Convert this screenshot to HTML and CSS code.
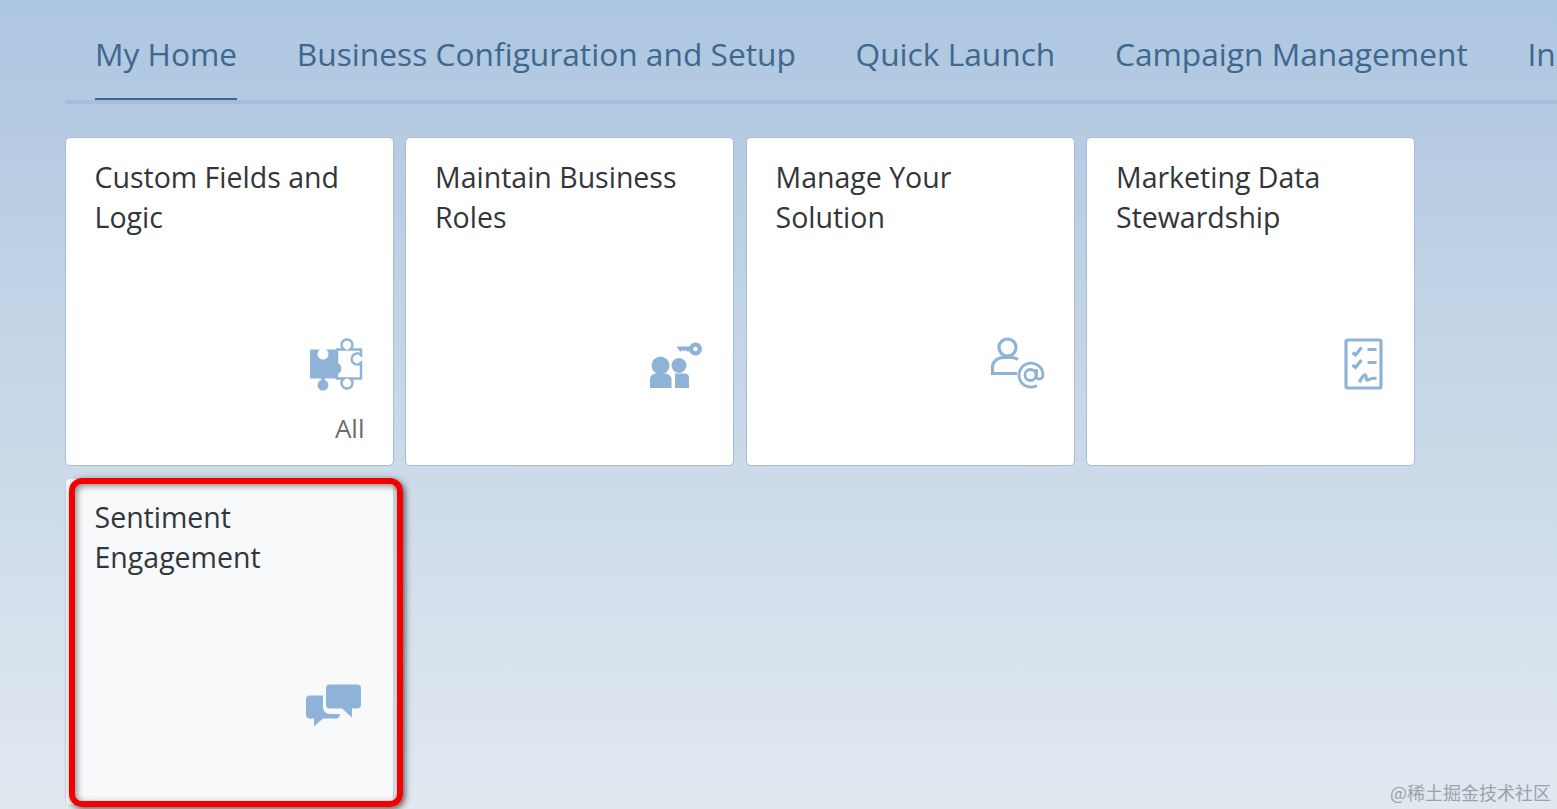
FILE: index.html
```html
<!DOCTYPE html>
<html lang="en">
<head>
<meta charset="utf-8">
<title>My Home</title>
<link rel="stylesheet" href="styles.css">
</head>
<body>
<div class="page">
  <nav class="tabs">
    <a class="tab tab-active">My Home</a>
    <a class="tab">Business Configuration and Setup</a>
    <a class="tab">Quick Launch</a>
    <a class="tab">Campaign Management</a>
    <a class="tab">Insights</a>
  </nav>
  <main class="tiles">
    <section class="tile">
      <h2 class="tile-title">Custom Fields and Logic</h2>
      <div class="tile-foot">
        <svg class="icon" width="54" height="54" viewBox="0 0 54 54">
          <path class="line" d="M27 11.500H34A5.500 5.500 0 1 1 40 11.500H51V17A5.500 5.500 0 1 0 51 25V40.500H40A5.500 5.500 0 1 1 34 40.500H27z"/>
          <path class="fill" d="M0 12.500a1 1 0 0 1 1-1H10A5.500 5.500 0 1 0 16 11.500H26V25A5.500 5.500 0 1 1 26 36V40.500H15V42A5.500 5.500 0 1 1 11 42V40.500H1a1 1 0 0 1-1-1z"/>
        </svg>
        <span class="tile-note">All</span>
      </div>
    </section>
    <section class="tile">
      <h2 class="tile-title">Maintain Business Roles</h2>
      <div class="tile-foot">
        <svg class="icon" width="54" height="54" viewBox="0 0 54 54">
          <circle class="fill" cx="10.500" cy="27.500" r="9"/>
          <path class="fill" d="M0 50V41c0-3 3-5.500 6-5.500h9c3 0 6.500 2.500 6.500 5.500v9z"/>
          <circle class="fill" cx="29" cy="27.500" r="7.500"/>
          <path class="fill" d="M25 50V37c0-1-.5-1.500-1-1.500h11c2 0 4 1.500 4 4V50z"/>
          <path class="fill" fill-rule="evenodd" d="M26.500 8.500H39.500a6.500 6.500 0 1 1 0 5H37l-1.500-1.500-1.500 1.500-1.500-1.500-1.500 1.500H30zM45.500 8.800a2.200 2.200 0 1 0 0 4.400 2.200 2.200 0 0 0 0-4.400z"/>
        </svg>
      </div>
    </section>
    <section class="tile">
      <h2 class="tile-title">Manage Your Solution</h2>
      <div class="tile-foot">
        <svg class="icon" width="54" height="54" viewBox="0 0 54 54">
          <circle class="line-2" cx="16.500" cy="9.500" r="8.500"/>
          <path class="line-2" d="M27 21.500C25 20 22 19.500 20 19.500H13C6 19.500 1.500 24 1.500 29V35.500H26"/>
          <circle class="line-3" cx="39.500" cy="37" r="5.500"/>
          <path class="line-3" d="M45.500 31v8c0 3 6.500 3 6.500-2.500A12 12 0 1 0 46 47.500"/>
        </svg>
      </div>
    </section>
    <section class="tile">
      <h2 class="tile-title">Marketing Data Stewardship</h2>
      <div class="tile-foot">
        <svg class="icon" width="54" height="54" viewBox="0 0 54 54">
          <rect class="line-2" x="15" y="2" width="35" height="48" rx="1.500"/>
          <path class="line-2" d="M21.500 14.500l3 2.500 6-7.500M21.500 27l3 2.500 6-7.500M36.500 11.500h9M36.500 24.500h9"/>
          <path class="line-2" d="M28.500 44.500C30 40 33 36 34.500 37 36 38 34 43 37 42 39 41 41 39.500 45.500 40.500"/>
        </svg>
      </div>
    </section>
    <section class="tile tile-hover">
      <h2 class="tile-title">Sentiment Engagement</h2>
      <div class="tile-foot">
        <svg class="icon" width="54" height="54" viewBox="0 0 54 54">
          <path class="fill" d="M16 10.500a4 4 0 0 1 4-4h27a4 4 0 0 1 4 4v16a4 4 0 0 1-4 4h-5v9l-10-9H20a4 4 0 0 1-4-4z"/>
          <path class="fill" d="M0 17.500h13V29c0 4 3 7 7 7h10c0 3-2 4.500-4 4.500H13l-9 8v-8H0a4 4 0 0 1-4-4v-15a4 4 0 0 1 4-4z"/>
        </svg>
      </div>
    </section>
  </main>
  <div class="callout"></div>
  <div class="watermark">@稀土掘金技术社区</div>
</div>
</body>
</html>
```
FILE: styles.css
```css
* { box-sizing: border-box; }
html, body { margin: 0; height: 100%; }
body { overflow: hidden; }
.page {
  position: relative;
  width: 1557px;
  height: 809px;
  overflow: hidden;
  padding: 0 0 0 65px;
  background: linear-gradient(180deg, #adc6e0 0%, #b7cce3 18%, #cddbe9 60%, #e1e8f0 100%);
  font-family: "Open Sans", "Noto Sans", sans-serif;
}
.tabs {
  display: flex;
  gap: 59.700px;
  height: 104px;
  padding-left: 30px;
  border-bottom: 4px solid #a6bfd9;
  white-space: nowrap;
}
.tab {
  height: 100px;
  padding-top: 31px;
  font-size: 31.700px;
  line-height: 46px;
  color: #3f678f;
}
.tab-active { border-bottom: 2px solid #3a6590; }
.tiles {
  display: grid;
  grid-template-columns: repeat(4, 329px);
  grid-auto-rows: 328.500px;
  gap: 12px 11.500px;
  margin: 33px 0 0 -.500px;
}
.tile {
  display: flex;
  flex-direction: column;
  justify-content: space-between;
  padding: 18.500px 29px 17px;
  background: #fff;
  border: 1px solid #a9bcd0;
  border-radius: 5px;
}
.tile-hover { background: #f7f9fb; border-color: #c9d4df; }
.tile-title {
  margin: 0;
  max-width: 250px;
  font-size: 28.500px;
  font-weight: 400;
  line-height: 40px;
  color: #32363a;
}
.tile-foot {
  display: flex;
  flex-direction: column;
  align-items: flex-end;
  height: 110px;
}
.icon { display: block; overflow: visible; }
.fill { fill: #8fb3d7; }
.line { fill: none; stroke: #8fb3d7; stroke-width: 2.500; }
.line-2 { fill: none; stroke: #8fb3d7; stroke-width: 3.200; }
.line-3 { fill: none; stroke: #8fb3d7; stroke-width: 2.800; }
.tile-note {
  margin: 18px -1px 0 0;
  font-size: 26px;
  line-height: 36px;
  color: #6a6d70;
}
.callout {
  position: absolute;
  left: 69px;
  top: 478px;
  width: 334px;
  height: 329px;
  border: 6px solid #f40000;
  border-radius: 13px;
  box-shadow: 2px 2px 6px rgba(30, 30, 30, .7), inset 2px 2px 6px rgba(30, 30, 30, .5);
}
.watermark {
  position: absolute;
  right: 6px;
  bottom: 5px;
  font-family: "Noto Sans CJK SC", sans-serif;
  font-size: 18px;
  line-height: 24px;
  color: #9aa3ab;
}
```
